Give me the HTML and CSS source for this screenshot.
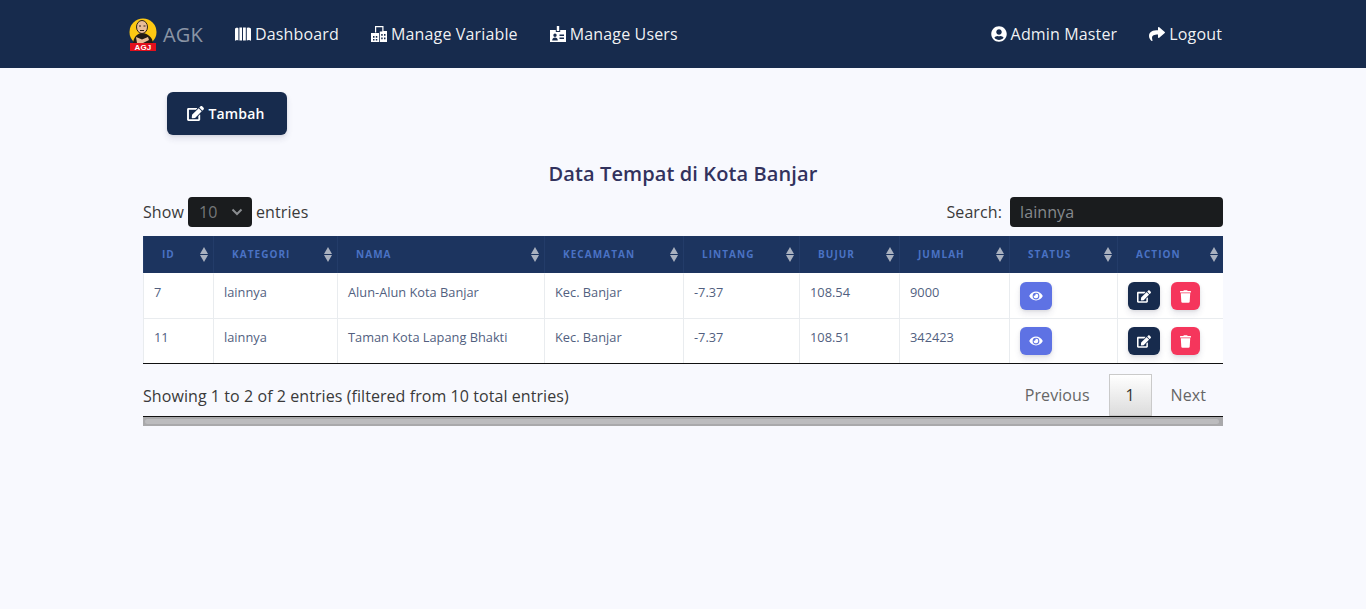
FILE: index.html
```html
<!DOCTYPE html>
<html lang="en">

<head>
    <meta charset="UTF-8">
    <meta name="viewport" content="width=device-width, initial-scale=1.0">
    <title>Data Tempat di Kota Banjar</title>
    <link rel="stylesheet" href="styles.css">
</head>

<body>
    <!-- Top navigation -->
    <nav class="navbar">
        <a class="brand" href="#">
            <svg class="brand-logo" viewBox="0 0 28 34">
                <circle cx="14" cy="15" r="13.500" fill="#fdc813" />
                <path d="M4 27c0-6 4-11 9-11s11 4 11 11z" fill="#231c14" />
                <ellipse cx="13" cy="10" rx="5.500" ry="6.500" fill="#e9bd98" stroke="#2e2217" stroke-width="1" />
                <path d="M10 9h2M14.500 9h2M11 13.500h4" stroke="#2e2217" stroke-width="1" />
                <path d="M7 20l6 2.500 6-2.500 1 3-6 3h-6z" fill="#e9bd98" />
                <rect x="1" y="26" width="26" height="8" fill="#e3101c" />
                <text class="brand-logo-text" x="14" y="33">AGJ</text>
            </svg>
            <span>AGK</span>
        </a>
        <a class="nav-link" href="#">
            <svg class="nav-icon" viewBox="0 0 16 16">
                <path d="M0 2.500 2 1.500 3.400 2.200V14.600L2 14 0 14.800ZM4.400 1.500H7V14.500H4.400ZM8 1.500H10.800V14.500H8ZM11.800 1.800 14 1.500 16 2.500V14.800L14 14 11.800 14.500Z" fill="#fff" />
            </svg>
            Dashboard
        </a>
        <a class="nav-link" href="#">
            <svg class="nav-icon" viewBox="0 0 16 16">
                <path fill-rule="evenodd" d="M4 0H12.500V5H16V16H8.800V5.500H11.300V1.200H5.200V6.500H4V7H8V16H0V7H4ZM2 10V11.800H3.500V10ZM4.800 10V11.800H6.300V10ZM2 13V14.500H3.500V13ZM4.800 13V14.500H6.300V13ZM10.200 8V9.800H11.700V8ZM13 8V9.800H14.500V8ZM10.200 11.500V13.300H11.700V11.500ZM13 11.500V13.300H14.500V11.500Z" fill="#fff" />
            </svg>
            Manage Variable
        </a>
        <a class="nav-link" href="#">
            <svg class="nav-icon" viewBox="0 0 16 16">
                <path fill-rule="evenodd" d="M6.800 0H9.200V5H6.800ZM0 4H5.800V6H10.200V4H16V16H0ZM5 7.500A1.700 1.700 0 1 0 5 10.900 1.700 1.700 0 0 0 5 7.500ZM2.200 14.500H7.800C7.800 12.800 6.600 11.500 5 11.500S2.200 12.800 2.200 14.500ZM9.500 8.500V10H14V8.500ZM9.500 11.500V13H14V11.500Z" fill="#fff" />
            </svg>
            Manage Users
        </a>
        <div class="nav-right">
            <a class="nav-link" href="#">
                <svg class="nav-icon" viewBox="0 0 496 512">
                    <path d="M248 8C111 8 0 119 0 256s111 248 248 248 248-111 248-248S385 8 248 8zm0 96c48.600 0 88 39.400 88 88s-39.400 88-88 88-88-39.400-88-88 39.400-88 88-88zm0 344c-58.700 0-111.300-26.600-146.500-68.200 18.800-35.400 55.600-59.800 98.500-59.800 2.400 0 4.800.4 7.100 1.100 13 4.200 26.600 6.900 40.900 6.900 14.300 0 28-2.700 40.900-6.900 2.300-.7 4.700-1.100 7.100-1.100 42.900 0 79.700 24.400 98.500 59.800C359.300 421.400 306.700 448 248 448z" fill="#fff" />
                </svg>
                Admin Master
            </a>
            <a class="nav-link" href="#">
                <svg class="nav-icon" viewBox="0 0 512 512">
                    <path d="M503.691 189.836L327.687 37.851C312.281 24.546 288 35.347 288 56.015v80.053C127.371 137.907 0 170.100 0 322.326c0 61.441 39.581 122.309 83.333 154.132 13.653 9.931 33.111-2.533 28.077-18.631C66.066 312.814 132.917 274.316 288 272.085V360c0 20.700 24.300 31.453 39.687 18.164l176.004-152c11.071-9.562 11.086-26.753 0-36.328z" fill="#fff" />
                </svg>
                Logout
            </a>
        </div>
    </nav>

    <main class="content">
        <button class="btn-add" type="button">
            <svg class="btn-add-icon" viewBox="0 0 576 512">
                <path d="M402.600 83.200l90.200 90.200c3.800 3.800 3.800 10 0 13.800L274.400 405.600l-92.800 10.300c-12.400 1.400-22.900-9.100-21.500-21.500l10.300-92.800L388.800 83.200c3.800-3.800 10-3.800 13.800 0zm162-22.900l-48.800-48.800c-15.200-15.200-39.900-15.200-55.200 0l-35.400 35.400c-3.800 3.800-3.800 10 0 13.800l90.200 90.200c3.800 3.800 10 3.800 13.800 0l35.400-35.400c15.200-15.300 15.200-40 0-55.200zM384 346.200V448H64V128h229.800c3.200 0 6.200-1.300 8.500-3.500l40-40c7.600-7.600 2.200-20.500-8.500-20.500H48C21.500 64 0 85.500 0 112v352c0 26.500 21.500 48 48 48h352c26.500 0 48-21.500 48-48V306.200c0-10.700-12.900-16-20.500-8.500l-40 40c-2.200 2.300-3.500 5.300-3.500 8.500z" fill="#fff" />
            </svg>
            Tambah
        </button>

        <h2 class="title">Data Tempat di Kota Banjar</h2>

        <div class="table-top">
            <label class="show-entries">
                Show
                <span class="select-box">10
                    <svg class="select-arrow" viewBox="0 0 12 8">
                        <path d="M1.500 1.500 6 6l4.500-4.500" fill="none" stroke="#8a8d90" stroke-width="2" />
                    </svg>
                </span>
                entries
            </label>
            <label class="search">
                Search:
                <input class="search-input" type="text" value="lainnya">
            </label>
        </div>

        <table class="data-table">
            <thead>
                <tr>
                    <th>ID</th>
                    <th>Kategori</th>
                    <th>Nama</th>
                    <th>Kecamatan</th>
                    <th>Lintang</th>
                    <th>Bujur</th>
                    <th>Jumlah</th>
                    <th>Status</th>
                    <th>Action</th>
                </tr>
            </thead>
            <tbody>
                <tr>
                    <td>7</td>
                    <td>lainnya</td>
                    <td>Alun-Alun Kota Banjar</td>
                    <td>Kec. Banjar</td>
                    <td>-7.37</td>
                    <td>108.54</td>
                    <td>9000</td>
                    <td>
                        <button class="btn-icon btn-view" type="button">
                            <svg class="icon-eye" viewBox="0 0 576 512"><use href="#eye" /></svg>
                        </button>
                    </td>
                    <td>
                        <div class="actions">
                            <button class="btn-icon btn-edit" type="button">
                                <svg class="icon-edit" viewBox="0 0 576 512"><use href="#edit" /></svg>
                            </button>
                            <button class="btn-icon btn-delete" type="button">
                                <svg class="icon-trash" viewBox="0 0 448 512"><use href="#trash" /></svg>
                            </button>
                        </div>
                    </td>
                </tr>
                <tr>
                    <td>11</td>
                    <td>lainnya</td>
                    <td>Taman Kota Lapang Bhakti</td>
                    <td>Kec. Banjar</td>
                    <td>-7.37</td>
                    <td>108.51</td>
                    <td>342423</td>
                    <td>
                        <button class="btn-icon btn-view" type="button">
                            <svg class="icon-eye" viewBox="0 0 576 512"><use href="#eye" /></svg>
                        </button>
                    </td>
                    <td>
                        <div class="actions">
                            <button class="btn-icon btn-edit" type="button">
                                <svg class="icon-edit" viewBox="0 0 576 512"><use href="#edit" /></svg>
                            </button>
                            <button class="btn-icon btn-delete" type="button">
                                <svg class="icon-trash" viewBox="0 0 448 512"><use href="#trash" /></svg>
                            </button>
                        </div>
                    </td>
                </tr>
            </tbody>
        </table>

        <div class="table-bottom">
            <div class="table-info">Showing 1 to 2 of 2 entries (filtered from 10 total entries)</div>
            <div class="pagination">
                <a class="page-btn" href="#">Previous</a>
                <a class="page-btn page-current" href="#">1</a>
                <a class="page-btn" href="#">Next</a>
            </div>
        </div>
        <div class="scroll-track">
            <div class="scroll-thumb"></div>
        </div>
    </main>

    <!-- Shared icons -->
    <svg class="icon-defs">
        <defs>
            <path id="eye" d="M572.520 241.400C518.290 135.590 410.930 64 288 64S57.680 135.640 3.480 241.410a32.350 32.350 0 0 0 0 29.190C57.710 376.410 165.070 448 288 448s230.320-71.640 284.520-177.410a32.350 32.350 0 0 0 0-29.190zM288 400a144 144 0 1 1 144-144 143.930 143.930 0 0 1-144 144zm0-240a95.310 95.310 0 0 0-25.310 3.790 47.850 47.850 0 0 1-66.900 66.900A95.780 95.780 0 1 0 288 160z" fill="#fff" />
            <path id="edit" d="M402.600 83.200l90.200 90.200c3.800 3.800 3.800 10 0 13.800L274.400 405.600l-92.800 10.300c-12.400 1.400-22.900-9.100-21.500-21.500l10.300-92.800L388.800 83.200c3.800-3.800 10-3.800 13.800 0zm162-22.900l-48.800-48.800c-15.200-15.200-39.900-15.200-55.200 0l-35.400 35.400c-3.800 3.800-3.800 10 0 13.800l90.200 90.200c3.800 3.800 10 3.800 13.800 0l35.400-35.400c15.200-15.300 15.200-40 0-55.200zM384 346.200V448H64V128h229.800c3.200 0 6.200-1.300 8.500-3.500l40-40c7.600-7.600 2.200-20.500-8.500-20.500H48C21.500 64 0 85.500 0 112v352c0 26.500 21.500 48 48 48h352c26.500 0 48-21.500 48-48V306.200c0-10.700-12.900-16-20.500-8.500l-40 40c-2.200 2.300-3.500 5.300-3.500 8.500z" fill="#fff" />
            <path id="trash" d="M432 32H312l-9.400-18.700A24 24 0 0 0 281.100 0H166.800a23.720 23.720 0 0 0-21.400 13.300L136 32H16A16 16 0 0 0 0 48v32a16 16 0 0 0 16 16h416a16 16 0 0 0 16-16V48a16 16 0 0 0-16-16zM53.200 467a48 48 0 0 0 47.900 45h245.800a48 48 0 0 0 47.900-45L416 128H32z" fill="#fff" />
        </defs>
    </svg>
</body>

</html>
```

FILE: styles.css
```css
* {
    box-sizing: border-box;
}

body {
    margin: 0;
    font-family: "Open Sans", sans-serif;
    font-size: 16px;
    background-color: #f8f9fe;
    color: #32325d;
}

a {
    text-decoration: none;
}

.navbar {
    display: flex;
    align-items: center;
    height: 68px;
    padding: 0 128px 0 129px;
    background-color: #172b4d;
}

.brand {
    display: flex;
    align-items: center;
    margin-right: 16px;
    font-size: 20px;
    letter-spacing: 0.2px;
    color: rgba(255, 255, 255, 0.5);
}

.brand-logo {
    width: 28px;
    height: 34px;
    margin-right: 6px;
}

.brand-logo-text {
    font-size: 8px;
    font-weight: 700;
    font-family: "Liberation Sans", sans-serif;
    text-anchor: middle;
    fill: #fff;
}

.nav-link {
    display: flex;
    align-items: center;
    gap: 4px;
    padding: 0 16px;
    color: rgba(255, 255, 255, 0.95);
    letter-spacing: 0.15px;
}

.nav-icon {
    width: 16px;
    height: 16px;
}

.nav-right {
    display: flex;
    margin-left: auto;
}

.content {
    width: 1080px;
    margin: 0 auto;
    padding-top: 24px;
}

.btn-add {
    display: flex;
    align-items: center;
    justify-content: center;
    gap: 4px;
    width: 120px;
    height: 43px;
    margin-left: 24px;
    padding: 0 2px 0 0;
    border: none;
    border-radius: 6px;
    background-color: #172b4d;
    color: #fff;
    font-family: inherit;
    font-size: 14px;
    font-weight: 600;
    letter-spacing: 0.15px;
    box-shadow: 0 4px 6px rgba(50, 50, 93, 0.11), 0 1px 3px rgba(0, 0, 0, 0.08);
}

.btn-add-icon {
    width: 17px;
    height: 15px;
}

.title {
    margin: 25px 0 10px;
    font-size: 20px;
    font-weight: 600;
    line-height: 27px;
    letter-spacing: 0.1px;
    text-align: center;
    color: #32325d;
}

.table-top {
    display: flex;
    justify-content: space-between;
    align-items: center;
    height: 30px;
    margin-bottom: 9px;
    color: #3a3a3a;
    letter-spacing: 0.1px;
}

.show-entries {
    display: flex;
    align-items: center;
    gap: 4px;
}

.select-box {
    display: flex;
    align-items: center;
    justify-content: space-between;
    width: 64px;
    height: 30px;
    padding: 0 9px 0 11px;
    border-radius: 4px;
    background-color: #1a1c1e;
    color: #757779;
}

.select-arrow {
    width: 12px;
    height: 8px;
}

.search {
    display: flex;
    align-items: center;
    gap: 8px;
}

.search-input {
    width: 213px;
    height: 30px;
    padding: 0 10px;
    border: none;
    border-radius: 4px;
    background-color: #1a1c1e;
    color: #868a8d;
    font-family: inherit;
    font-size: 16px;
    letter-spacing: 0.1px;
}

.data-table {
    width: 1080px;
    table-layout: fixed;
    border-collapse: separate;
    border-spacing: 0;
    border-bottom: 1px solid #111;
    background-color: #fff;
}

.data-table th {
    position: relative;
    height: 37px;
    padding: 0 0 1px 18px;
    background-color: #1c345f;
    border-left: 1px solid #233c69;
    color: #4a72c4;
    font-size: 10px;
    font-weight: 700;
    letter-spacing: 1.05px;
    text-align: left;
    text-transform: uppercase;
}

/* sort arrows, one up and one down */
.data-table th::before,
.data-table th::after {
    content: "";
    position: absolute;
    right: 5px;
    border-left: 4px solid transparent;
    border-right: 4px solid transparent;
}

.data-table th::before {
    top: 11px;
    border-bottom: 7px solid #a9b1bf;
}

.data-table th::after {
    top: 19px;
    border-top: 7px solid #a9b1bf;
}

.data-table th:nth-child(1) { width: 70px; }
.data-table th:nth-child(2) { width: 124px; }
.data-table th:nth-child(3) { width: 207px; }
.data-table th:nth-child(4) { width: 139px; }
.data-table th:nth-child(5) { width: 116px; }
.data-table th:nth-child(6) { width: 100px; }
.data-table th:nth-child(7) { width: 110px; }
.data-table th:nth-child(8) { width: 108px; }
.data-table th:nth-child(9) { width: 106px; }

.data-table td {
    height: 45px;
    padding: 8px 10px 0;
    border-left: 1px solid #e9ecef;
    border-top: 1px solid #e9ecef;
    color: #525f7f;
    font-size: 12.8px;
    line-height: 20px;
    vertical-align: top;
    white-space: nowrap;
}

.data-table tbody tr:first-child td {
    border-top-color: #fff;
}

.actions {
    display: flex;
    gap: 11px;
}

.btn-icon {
    display: flex;
    align-items: center;
    justify-content: center;
    width: 32px;
    height: 28px;
    padding: 0;
    border: none;
    border-radius: 6px;
    box-shadow: 0 4px 6px rgba(50, 50, 93, 0.11), 0 1px 3px rgba(0, 0, 0, 0.08);
}

.btn-view {
    background-color: #5e72e4;
}

.btn-edit {
    background-color: #172b4d;
}

.btn-delete {
    width: 29px;
    background-color: #f5365c;
}

.icon-eye {
    width: 14px;
    height: 12px;
}

.icon-edit {
    width: 14px;
    height: 13px;
}

.icon-trash {
    width: 11px;
    height: 13px;
}

.table-bottom {
    display: flex;
    justify-content: space-between;
    align-items: flex-end;
    height: 53px;
    border-bottom: 1px solid #111;
    color: #3a3a3a;
    letter-spacing: 0.07px;
}

.table-info {
    align-self: center;
    padding-top: 12px;
}

.pagination {
    display: flex;
    gap: 2px;
    height: 42px;
}

.page-btn {
    display: flex;
    align-items: center;
    padding: 0 17px;
    color: #666;
}

.page-current {
    width: 43px;
    padding: 0;
    justify-content: center;
    border: 1px solid #cacaca;
    background: linear-gradient(#fff, #dcdcdc);
    color: #333;
}

.scroll-track {
    height: 9px;
    padding: 2px 4px 2px 2px;
    background-color: #a9a9ab;
}

.scroll-thumb {
    height: 5px;
    border-radius: 3px;
    background-color: #bcbcbe;
}

.icon-defs {
    display: none;
}
```
